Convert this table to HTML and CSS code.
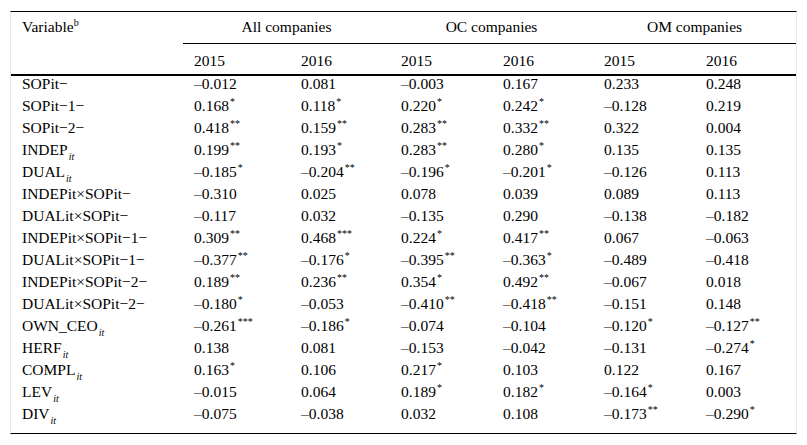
FILE: index.html
```html
<!DOCTYPE html>
<html lang="en">
<head>
<meta charset="utf-8">
<title>Regression table</title>
<link rel="stylesheet" href="styles.css">
</head>
<body>
<div class="page">
<table class="tbl">
  <colgroup>
    <col class="c-var">
    <col class="c-a1"><col class="c-a2">
    <col class="c-b1"><col class="c-b2">
    <col class="c-c1"><col class="c-c2">
  </colgroup>
  <thead>
    <tr class="h1">
      <th class="var" rowspan="2">Variable<sup class="fn">b</sup></th>
      <th class="grp" colspan="2">All companies</th>
      <th class="grp" colspan="2">OC companies</th>
      <th class="grp" colspan="2">OM companies</th>
    </tr>
    <tr class="h2">
      <th>2015</th><th>2016</th><th>2015</th><th>2016</th><th>2015</th><th>2016</th>
    </tr>
  </thead>
  <tbody>
    <tr><td>SOPit−</td><td>–0.012</td><td>0.081</td><td>–0.003</td><td>0.167</td><td>0.233</td><td>0.248</td></tr>
    <tr><td>SOPit−1−</td><td>0.168<sup class="st">*</sup></td><td>0.118<sup class="st">*</sup></td><td>0.220<sup class="st">*</sup></td><td>0.242<sup class="st">*</sup></td><td>–0.128</td><td>0.219</td></tr>
    <tr><td>SOPit−2−</td><td>0.418<sup class="st">**</sup></td><td>0.159<sup class="st">**</sup></td><td>0.283<sup class="st">**</sup></td><td>0.332<sup class="st">**</sup></td><td>0.322</td><td>0.004</td></tr>
    <tr><td>INDEP<sub class="it">it</sub></td><td>0.199<sup class="st">**</sup></td><td>0.193<sup class="st">*</sup></td><td>0.283<sup class="st">**</sup></td><td>0.280<sup class="st">*</sup></td><td>0.135</td><td>0.135</td></tr>
    <tr><td>DUAL<sub class="it">it</sub></td><td>–0.185<sup class="st">*</sup></td><td>–0.204<sup class="st">**</sup></td><td>–0.196<sup class="st">*</sup></td><td>–0.201<sup class="st">*</sup></td><td>–0.126</td><td>0.113</td></tr>
    <tr><td>INDEPit×SOPit−</td><td>–0.310</td><td>0.025</td><td>0.078</td><td>0.039</td><td>0.089</td><td>0.113</td></tr>
    <tr><td>DUALit×SOPit−</td><td>–0.117</td><td>0.032</td><td>–0.135</td><td>0.290</td><td>–0.138</td><td>–0.182</td></tr>
    <tr><td>INDEPit×SOPit−1−</td><td>0.309<sup class="st">**</sup></td><td>0.468<sup class="st">***</sup></td><td>0.224<sup class="st">*</sup></td><td>0.417<sup class="st">**</sup></td><td>0.067</td><td>–0.063</td></tr>
    <tr><td>DUALit×SOPit−1−</td><td>–0.377<sup class="st">**</sup></td><td>–0.176<sup class="st">*</sup></td><td>–0.395<sup class="st">**</sup></td><td>–0.363<sup class="st">*</sup></td><td>–0.489</td><td>–0.418</td></tr>
    <tr><td>INDEPit×SOPit−2−</td><td>0.189<sup class="st">**</sup></td><td>0.236<sup class="st">**</sup></td><td>0.354<sup class="st">*</sup></td><td>0.492<sup class="st">**</sup></td><td>–0.067</td><td>0.018</td></tr>
    <tr><td>DUALit×SOPit−2−</td><td>–0.180<sup class="st">*</sup></td><td>–0.053</td><td>–0.410<sup class="st">**</sup></td><td>–0.418<sup class="st">**</sup></td><td>–0.151</td><td>0.148</td></tr>
    <tr><td>OWN_CEO<sub class="it">it</sub></td><td>–0.261<sup class="st">***</sup></td><td>–0.186<sup class="st">*</sup></td><td>–0.074</td><td>–0.104</td><td>–0.120<sup class="st">*</sup></td><td>–0.127<sup class="st">**</sup></td></tr>
    <tr><td>HERF<sub class="it">it</sub></td><td>0.138</td><td>0.081</td><td>–0.153</td><td>–0.042</td><td>–0.131</td><td>–0.274<sup class="st">*</sup></td></tr>
    <tr><td>COMPL<sub class="it">it</sub></td><td>0.163<sup class="st">*</sup></td><td>0.106</td><td>0.217<sup class="st">*</sup></td><td>0.103</td><td>0.122</td><td>0.167</td></tr>
    <tr><td>LEV<sub class="it">it</sub></td><td>–0.015</td><td>0.064</td><td>0.189<sup class="st">*</sup></td><td>0.182<sup class="st">*</sup></td><td>–0.164<sup class="st">*</sup></td><td>0.003</td></tr>
    <tr class="last"><td>DIV<sub class="it">it</sub></td><td>–0.075</td><td>–0.038</td><td>0.032</td><td>0.108</td><td>–0.173<sup class="st">**</sup></td><td>–0.290<sup class="st">*</sup></td></tr>
  </tbody>
</table>
</div>
</body>
</html>
```
FILE: styles.css
```css
html, body {
  margin: 0;
  padding: 0;
  background: #fff;
}
.page {
  padding: 11px 10px 0 10px;
}
.tbl {
  width: 787px;
  table-layout: fixed;
  border-collapse: separate;
  border-spacing: 0;
  border-top: 1px solid #000;
  border-bottom: 1px solid #000;
  border-left: 1px solid #e8e8e8;
  border-right: 1px solid #e8e8e8;
  font-family: "Liberation Serif", "Times New Roman", serif;
  font-size: 15.5px;
  color: #000;
}
.c-var { width: 172px; }
.c-a1 { width: 107px; }
.c-a2 { width: 100px; }
.c-b1 { width: 102px; }
.c-b2 { width: 101px; }
.c-c1 { width: 102px; }
.c-c2 { width: 101px; }

.tbl th, .tbl td {
  padding: 0 0 0 11px;
  text-align: left;
  font-weight: normal;
  white-space: nowrap;
  vertical-align: top;
  line-height: 17px;
}
.tbl .h1 th {
  height: 32px;
  padding-top: 6px;
  box-sizing: border-box;
}
.tbl .h1 th.grp {
  text-align: center;
  padding-left: 0;
  border-bottom: 1px solid #000;
}
.tbl .h2 th {
  height: 32px;
  padding-top: 8px;
  box-sizing: border-box;
  border-bottom: 2px solid #000;
}
.tbl .h1 th.var {
  border-bottom: 2px solid #000;
}
.fn {
  font-size: 10px;
  line-height: 0;
  vertical-align: 6px;
}
.tbl tbody td {
  height: 22px;
  line-height: 15px;
  padding-top: 0;
  padding-bottom: 0;
  box-sizing: border-box;
}
.tbl tbody tr.last td {
  height: 27px;
  padding-bottom: 5px;
}
.it {
  font-style: italic;
  font-size: 10px;
  line-height: 0;
  vertical-align: -5px;
  margin-left: 1px;
}
.st {
  font-size: 10px;
  line-height: 0;
  vertical-align: 6px;
  margin-left: 1px;
}
```
